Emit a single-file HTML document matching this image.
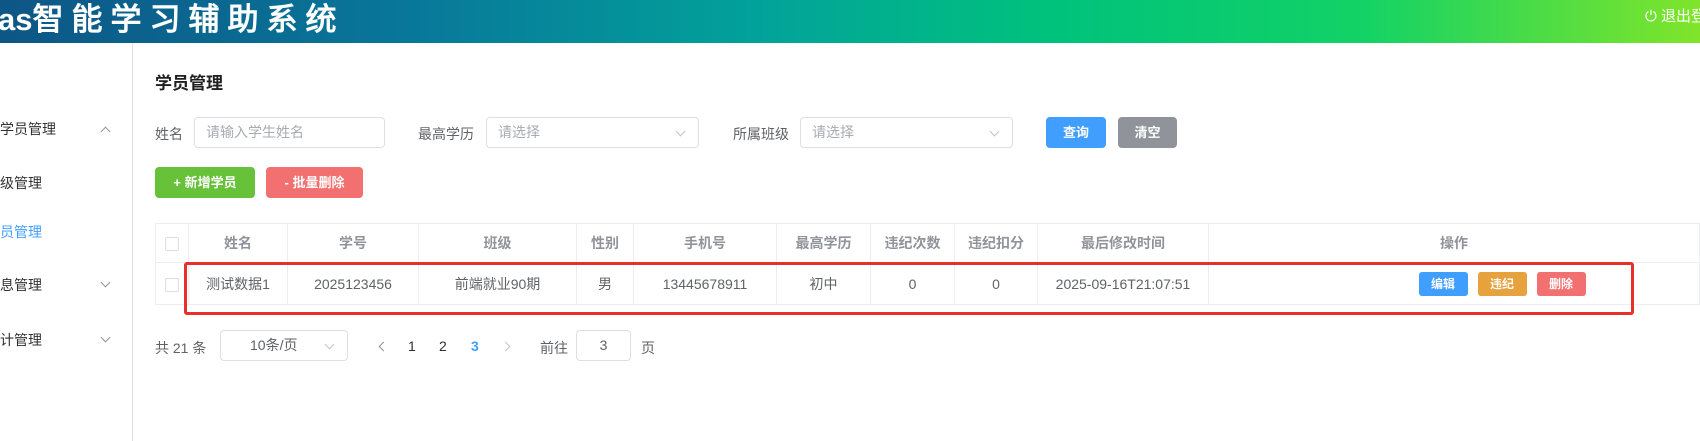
<!DOCTYPE html>
<html><head><meta charset="utf-8">
<style>
*{margin:0;padding:0;box-sizing:border-box}
body{width:1700px;height:441px;overflow:hidden;background:#fff;font-family:"Liberation Sans","Noto Sans CJK SC",sans-serif;font-size:14px;color:#606266;position:relative}
.a{position:absolute}
.hdr{left:0;top:0;width:1700px;height:43px;background:linear-gradient(90deg,#0d5686 0%,#08799a 25%,#02a39a 45%,#00c27c 62%,#12d266 80%,#80e52a 100%)}
.ttl{left:-2px;top:1px;font-size:31px;font-weight:bold;color:#fff;font-family:"Liberation Sans","WenQuanYi Zen Hei",sans-serif;line-height:38px;white-space:nowrap}
.ttl span{letter-spacing:8px}
.out{left:1645px;top:5px;color:#fff;font-size:15px;white-space:nowrap}
.side{left:0;top:43px;width:133px;height:398px;border-right:1px solid #e0e0e0}
.mi{font-size:14px;color:#303133;left:0}
.chv{position:absolute;width:7px;height:7px;border-right:1px solid #909399;border-bottom:1px solid #909399;transform:rotate(45deg)}
.chv.up{transform:rotate(-135deg)}
.inp{border:1px solid #dcdfe6;border-radius:4px;height:31px;color:#a8abb2;line-height:29px;padding-left:11px;font-size:14px}
.inp .chv{right:14px;top:10px;border-color:#c0c4cc}
.btn{border-radius:4px;color:#fff;text-align:center;font-weight:bold;font-size:13px}
table{border-collapse:collapse;position:absolute;left:155px;top:223px;width:1545px}
td,th{border:1px solid #ebeef5;text-align:center;height:39px;font-size:14px}
th{color:#909399;font-weight:bold;height:39px}
td{height:42px;color:#606266}
.cb{display:inline-block;width:14px;height:14px;border:1px solid #dcdfe6;border-radius:2px;vertical-align:middle}
.sb{display:inline-block;width:49px;height:24px;line-height:24px;color:#fff;border-radius:3px;font-size:12px;font-weight:bold;margin:0 5px}
</style></head><body>
<div class="a hdr"></div>
<div class="a ttl">as<span>智能学习辅助系统</span></div>
<div class="a out">⏻ 退出登录</div>
<div class="a side"></div>
<div class="a mi" style="top:119px">学员管理</div><div class="chv up" style="left:102px;top:128px"></div>
<div class="a mi" style="top:173px">级管理</div>
<div class="a mi" style="top:222px;color:#409eff">员管理</div>
<div class="a mi" style="top:275px">息管理</div><div class="chv" style="left:102px;top:279px"></div>
<div class="a mi" style="top:330px">计管理</div><div class="chv" style="left:102px;top:334px"></div>

<div class="a" style="left:155px;top:69px;font-size:17px;font-weight:bold;color:#1f1f1f">学员管理</div>
<div class="a" style="left:155px;top:124px">姓名</div>
<div class="a inp" style="left:194px;top:117px;width:191px">请输入学生姓名</div>
<div class="a" style="left:418px;top:124px">最高学历</div>
<div class="a inp" style="left:486px;top:117px;width:213px">请选择<span class="chv"></span></div>
<div class="a" style="left:733px;top:124px">所属班级</div>
<div class="a inp" style="left:800px;top:117px;width:213px">请选择<span class="chv"></span></div>
<div class="a btn" style="left:1046px;top:117px;width:60px;height:31px;line-height:31px;background:#409eff">查询</div>
<div class="a btn" style="left:1118px;top:117px;width:59px;height:31px;line-height:31px;background:#909399">清空</div>
<div class="a btn" style="left:155px;top:167px;width:100px;height:31px;line-height:31px;background:#67c23a">+ 新增学员</div>
<div class="a btn" style="left:266px;top:167px;width:97px;height:31px;line-height:31px;background:#f37070">- 批量删除</div>

<table>
<tr><th style="width:33px"><span class="cb"></span></th><th style="width:99px">姓名</th><th style="width:131px">学号</th><th style="width:158px">班级</th><th style="width:57px">性别</th><th style="width:143px">手机号</th><th style="width:94px">最高学历</th><th style="width:84px">违纪次数</th><th style="width:83px">违纪扣分</th><th style="width:171px">最后修改时间</th><th>操作</th></tr>
<tr><td><span class="cb"></span></td><td>测试数据1</td><td>2025123456</td><td>前端就业90期</td><td>男</td><td>13445678911</td><td>初中</td><td>0</td><td>0</td><td>2025-09-16T21:07:51</td><td style="padding-left:96px"><span class="sb" style="background:#409eff">编辑</span><span class="sb" style="background:#e6a23c">违纪</span><span class="sb" style="background:#f37070">删除</span></td></tr>
</table>
<div class="a" style="left:184px;top:262px;width:1450px;height:53px;border:3px solid #e8302a;border-radius:3px"></div>

<div class="a" style="left:155px;top:338px">共 21 条</div>
<div class="a inp" style="left:220px;top:330px;width:128px;color:#606266;padding-left:29px">10条/页<span class="chv"></span></div>
<div class="chv" style="left:380px;top:343px;transform:rotate(135deg)"></div>
<div class="a" style="left:408px;top:338px;color:#303133">1</div>
<div class="a" style="left:439px;top:338px;color:#303133">2</div>
<div class="a" style="left:471px;top:338px;color:#409eff;font-weight:bold">3</div>
<div class="chv" style="left:502px;top:343px;transform:rotate(-45deg);border-color:#c0c4cc"></div>
<div class="a" style="left:540px;top:338px">前往</div>
<div class="a inp" style="left:576px;top:330px;width:55px;padding:0;text-align:center;color:#606266">3</div>
<div class="a" style="left:641px;top:338px">页</div>
</body></html>
